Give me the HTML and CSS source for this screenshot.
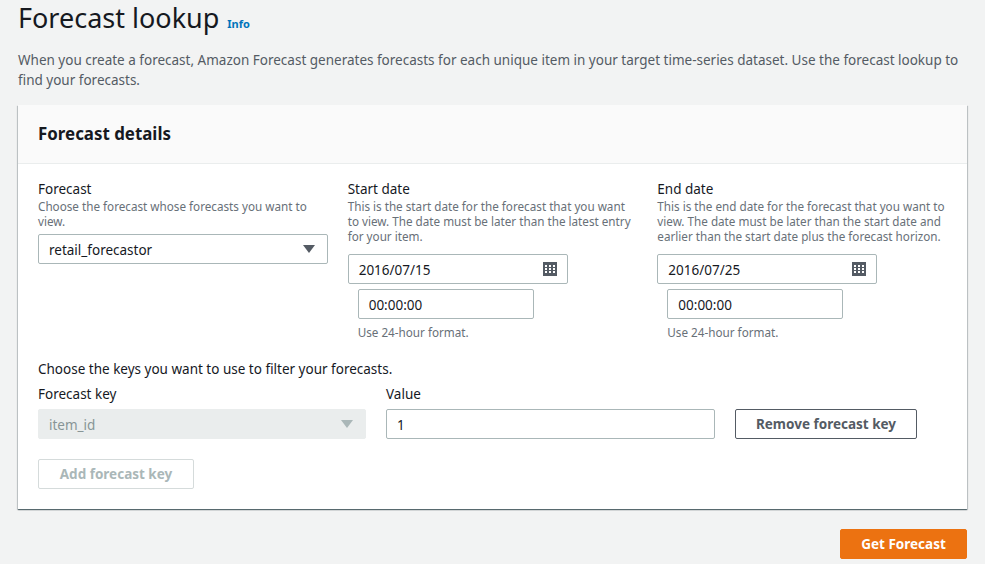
FILE: index.html
```html
<!DOCTYPE html>
<html lang="en">
<head>
  <meta charset="UTF-8" />
  <title>Forecast lookup</title>
  <link rel="stylesheet" href="styles.css">
</head>
<body>
  <div class="title-row">
    <h1>Forecast lookup</h1>
    <a class="info-link" href="#">Info</a>
  </div>
  <p class="intro">When you create a forecast, Amazon Forecast generates forecasts for each unique item in your target time-series dataset. Use the forecast lookup to find your forecasts.</p>

  <div class="card">
    <div class="card-header">
      <h2>Forecast details</h2>
    </div>
    <div class="card-body">
      <div class="date-grid">
        <div>
          <div class="label">Forecast</div>
          <div class="desc">Choose the forecast whose forecasts you want to view.</div>
          <div class="select">
            <span>retail_forecastor</span>
            <span class="caret"></span>
          </div>
        </div>
        <div>
          <div class="label">Start date</div>
          <div class="desc">This is the start date for the forecast that you want to view. The date must be later than the latest entry for your item.</div>
          <div class="input date-input">
            <span>2016/07/15</span>
            <svg class="cal" width="14" height="14" viewBox="0 0 14 14"><path fill="#545b64" fill-rule="evenodd" d="M0 0h14v14H0z M2 3v2h2V3z M6 3v2h2V3z M10 3v2h2V3z M2 6v2h2V6z M6 6v2h2V6z M10 6v2h2V6z M2 9v2h2V9z M6 9v2h2V9z M10 9v2h2V9z"/></svg>
          </div>
          <div class="input time-input">00:00:00</div>
          <div class="hint">Use 24-hour format.</div>
        </div>
        <div>
          <div class="label">End date</div>
          <div class="desc">This is the end date for the forecast that you want to view. The date must be later than the start date and earlier than the start date plus the forecast horizon.</div>
          <div class="input date-input">
            <span>2016/07/25</span>
            <svg class="cal" width="14" height="14" viewBox="0 0 14 14"><path fill="#545b64" fill-rule="evenodd" d="M0 0h14v14H0z M2 3v2h2V3z M6 3v2h2V3z M10 3v2h2V3z M2 6v2h2V6z M6 6v2h2V6z M10 6v2h2V6z M2 9v2h2V9z M6 9v2h2V9z M10 9v2h2V9z"/></svg>
          </div>
          <div class="input time-input">00:00:00</div>
          <div class="hint">Use 24-hour format.</div>
        </div>
      </div>

      <p class="keys-intro">Choose the keys you want to use to filter your forecasts.</p>
      <div class="key-row">
        <div>
          <div class="label">Forecast key</div>
          <div class="select disabled">
            <span>item_id</span>
            <span class="caret"></span>
          </div>
        </div>
        <div>
          <div class="label">Value</div>
          <div class="input">1</div>
        </div>
        <button class="btn remove-btn">Remove forecast key</button>
      </div>
      <button class="btn add-btn" disabled>Add forecast key</button>
    </div>
  </div>

  <div class="actions">
    <button class="btn primary">Get Forecast</button>
  </div>
</body>
</html>
```

FILE: styles.css
```css
* {
  box-sizing: border-box;
}

body {
  margin: 0;
  padding: 0 18px;
  height: 564px;
  overflow: hidden;
  background: #f2f3f3;
  color: #16191f;
  font-family: "Noto Sans", sans-serif;
  font-size: 13.5px;
  line-height: 20px;
}

.title-row {
  display: flex;
  align-items: baseline;
  gap: 8px;
  height: 36px;
}

h1 {
  margin: 0;
  font-size: 27px;
  font-weight: 400;
  line-height: 35px;
}

.info-link {
  color: #0073bb;
  font-size: 11px;
  font-weight: 700;
  text-decoration: none;
}

.intro {
  margin: 14px 0 15px;
  color: #545b64;
}

.card {
  height: 404px;
  background: #fff;
  box-shadow: 0 1px 1px 0 rgba(0, 28, 36, 0.5), 1px 1px 1px 0 rgba(0, 28, 36, 0.15), -1px 1px 1px 0 rgba(0, 28, 36, 0.15);
}

.card-header {
  height: 59px;
  padding: 19px 20px 0;
  background: #fafafa;
  border-bottom: 1px solid #eaeded;
}

h2 {
  margin: 0;
  font-size: 16.9px;
  font-weight: 700;
  line-height: 20px;
}

.card-body {
  padding: 15px 20px 0;
}

.date-grid {
  display: grid;
  grid-template-columns: repeat(3, 1fr);
  gap: 20px;
}

.desc {
  margin-bottom: 5px;
  color: #687078;
  font-size: 11.7px;
  line-height: 15px;
}

.select, .input {
  display: flex;
  align-items: center;
  justify-content: space-between;
  height: 30px;
  padding: 1px 10px 0;
  background: #fff;
  border: 1px solid #aab7b8;
  border-radius: 2px;
}

.caret {
  width: 0;
  height: 0;
  margin: -1px 2px 0 0;
  border-left: 6px solid transparent;
  border-right: 6px solid transparent;
  border-top: 8px solid #545b64;
}

.select.disabled {
  background: #eaeded;
  border-color: #eaeded;
  color: #879596;
}

.select.disabled .caret {
  border-top-color: #aab7b8;
}

.date-input {
  width: 220px;
  margin-top: 10px;
}

.cal {
  margin: -1px 0 0 0;
}

.time-input {
  width: 176px;
  margin: 5px 0 0 10px;
}

.hint {
  margin: 5px 0 0 10px;
  color: #687078;
  font-size: 11.7px;
  line-height: 16px;
}

.keys-intro {
  margin: 19px 0 0;
}

.key-row {
  display: grid;
  grid-template-columns: 328px 329px 182px;
  gap: 20px;
  align-items: end;
  margin-top: 5px;
}

.key-row .label {
  margin-bottom: 5px;
}

.btn {
  height: 30px;
  padding: 0;
  font-family: inherit;
  font-size: 13.5px;
  font-weight: 700;
  background: #fff;
  border-radius: 2px;
}

.remove-btn {
  color: #545b64;
  border: 1px solid #545b64;
}

.add-btn {
  width: 156px;
  margin-top: 20px;
  color: #aab7b8;
  border: 1px solid #d5dbdb;
}

.actions {
  display: flex;
  justify-content: flex-end;
  margin-top: 20px;
}

.primary {
  width: 127px;
  color: #fff;
  background: #ec7211;
  border: 1px solid #ec7211;
}
```
